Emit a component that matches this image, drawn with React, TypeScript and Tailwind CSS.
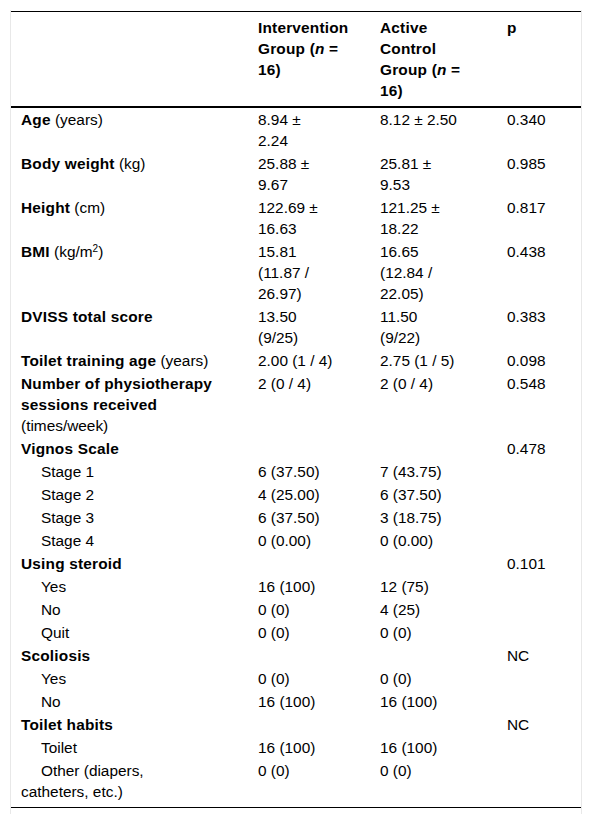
type Row = {
  label: React.ReactNode
  a: React.ReactNode
  b: React.ReactNode
  p?: string
  sub?: boolean
}

const rows: Row[] = [
  { label: <><b>Age</b> (years)</>, a: <>8.94 ±<br />2.24</>, b: '8.12 ± 2.50', p: '0.340' },
  { label: <><b>Body weight</b> (kg)</>, a: <>25.88 ±<br />9.67</>, b: <>25.81 ±<br />9.53</>, p: '0.985' },
  { label: <><b>Height</b> (cm)</>, a: <>122.69 ±<br />16.63</>, b: <>121.25 ±<br />18.22</>, p: '0.817' },
  {
    label: <><b>BMI</b> (kg/m<sup className="text-[10px]">2</sup>)</>,
    a: <>15.81<br />(11.87 /<br />26.97)</>,
    b: <>16.65<br />(12.84 /<br />22.05)</>,
    p: '0.438',
  },
  { label: <b>DVISS total score</b>, a: <>13.50<br />(9/25)</>, b: <>11.50<br />(9/22)</>, p: '0.383' },
  { label: <><b>Toilet training age</b> (years)</>, a: '2.00 (1 / 4)', b: '2.75 (1 / 5)', p: '0.098' },
  {
    label: <><b>Number of physiotherapy<br />sessions received</b><br />(times/week)</>,
    a: '2 (0 / 4)',
    b: '2 (0 / 4)',
    p: '0.548',
  },
  { label: <b>Vignos Scale</b>, a: '', b: '', p: '0.478' },
  { label: 'Stage 1', a: '6 (37.50)', b: '7 (43.75)', sub: true },
  { label: 'Stage 2', a: '4 (25.00)', b: '6 (37.50)', sub: true },
  { label: 'Stage 3', a: '6 (37.50)', b: '3 (18.75)', sub: true },
  { label: 'Stage 4', a: '0 (0.00)', b: '0 (0.00)', sub: true },
  { label: <b>Using steroid</b>, a: '', b: '', p: '0.101' },
  { label: 'Yes', a: '16 (100)', b: '12 (75)', sub: true },
  { label: 'No', a: '0 (0)', b: '4 (25)', sub: true },
  { label: 'Quit', a: '0 (0)', b: '0 (0)', sub: true },
  { label: <b>Scoliosis</b>, a: '', b: '', p: 'NC' },
  { label: 'Yes', a: '0 (0)', b: '0 (0)', sub: true },
  { label: 'No', a: '16 (100)', b: '16 (100)', sub: true },
  { label: <b>Toilet habits</b>, a: '', b: '', p: 'NC' },
  { label: 'Toilet', a: '16 (100)', b: '16 (100)', sub: true },
  { label: <>Other (diapers,<br />catheters, etc.)</>, a: '0 (0)', b: '0 (0)', sub: true },
]

export default function App() {
  return (
    <div className="min-h-[820px] bg-white pt-[10px] pl-[10px] font-['Liberation_Sans',Arial,sans-serif] text-[15.4px] leading-[21px] text-black [&_b]:tracking-[0.2px]">
      <div className="w-[572px] border-x border-[#e8e8e8] pt-px pb-[6px]">
        <table className="w-[570px] table-fixed border-collapse border-b border-black">
          <colgroup>
            <col className="w-[237px]" />
            <col className="w-[122px]" />
            <col className="w-[127px]" />
            <col className="w-[84px]" />
          </colgroup>
          <thead>
            <tr className="border-t border-black border-b-2 align-top text-left font-bold tracking-[0.2px]">
              <th className="pl-[10px] pt-[5px] pb-[5px]"></th>
              <th className="whitespace-nowrap pl-[10px] pt-[5px] pb-[5px] font-bold">
                Intervention
                <br />
                Group (<i>n</i> =
                <br />
                16)
              </th>
              <th className="whitespace-nowrap pl-[10px] pt-[5px] pb-[5px] font-bold">
                Active
                <br />
                Control
                <br />
                Group (<i>n</i> =
                <br />
                16)
              </th>
              <th className="pl-[10px] pt-[5px] pb-[5px] font-bold">p</th>
            </tr>
          </thead>
          <tbody>
            {rows.map((r, i) => (
              <tr key={i} className="align-top">
                <td className={`whitespace-nowrap pl-[10px] pt-px ${r.sub ? 'indent-5' : ''} ${i === rows.length - 1 ? 'pb-[5px]' : 'pb-px'}`}>
                  {r.label}
                </td>
                <td className="whitespace-nowrap pl-[10px] py-px">{r.a}</td>
                <td className="whitespace-nowrap pl-[10px] py-px">{r.b}</td>
                <td className="whitespace-nowrap pl-[10px] py-px">{r.p}</td>
              </tr>
            ))}
          </tbody>
        </table>
      </div>
    </div>
  )
}
